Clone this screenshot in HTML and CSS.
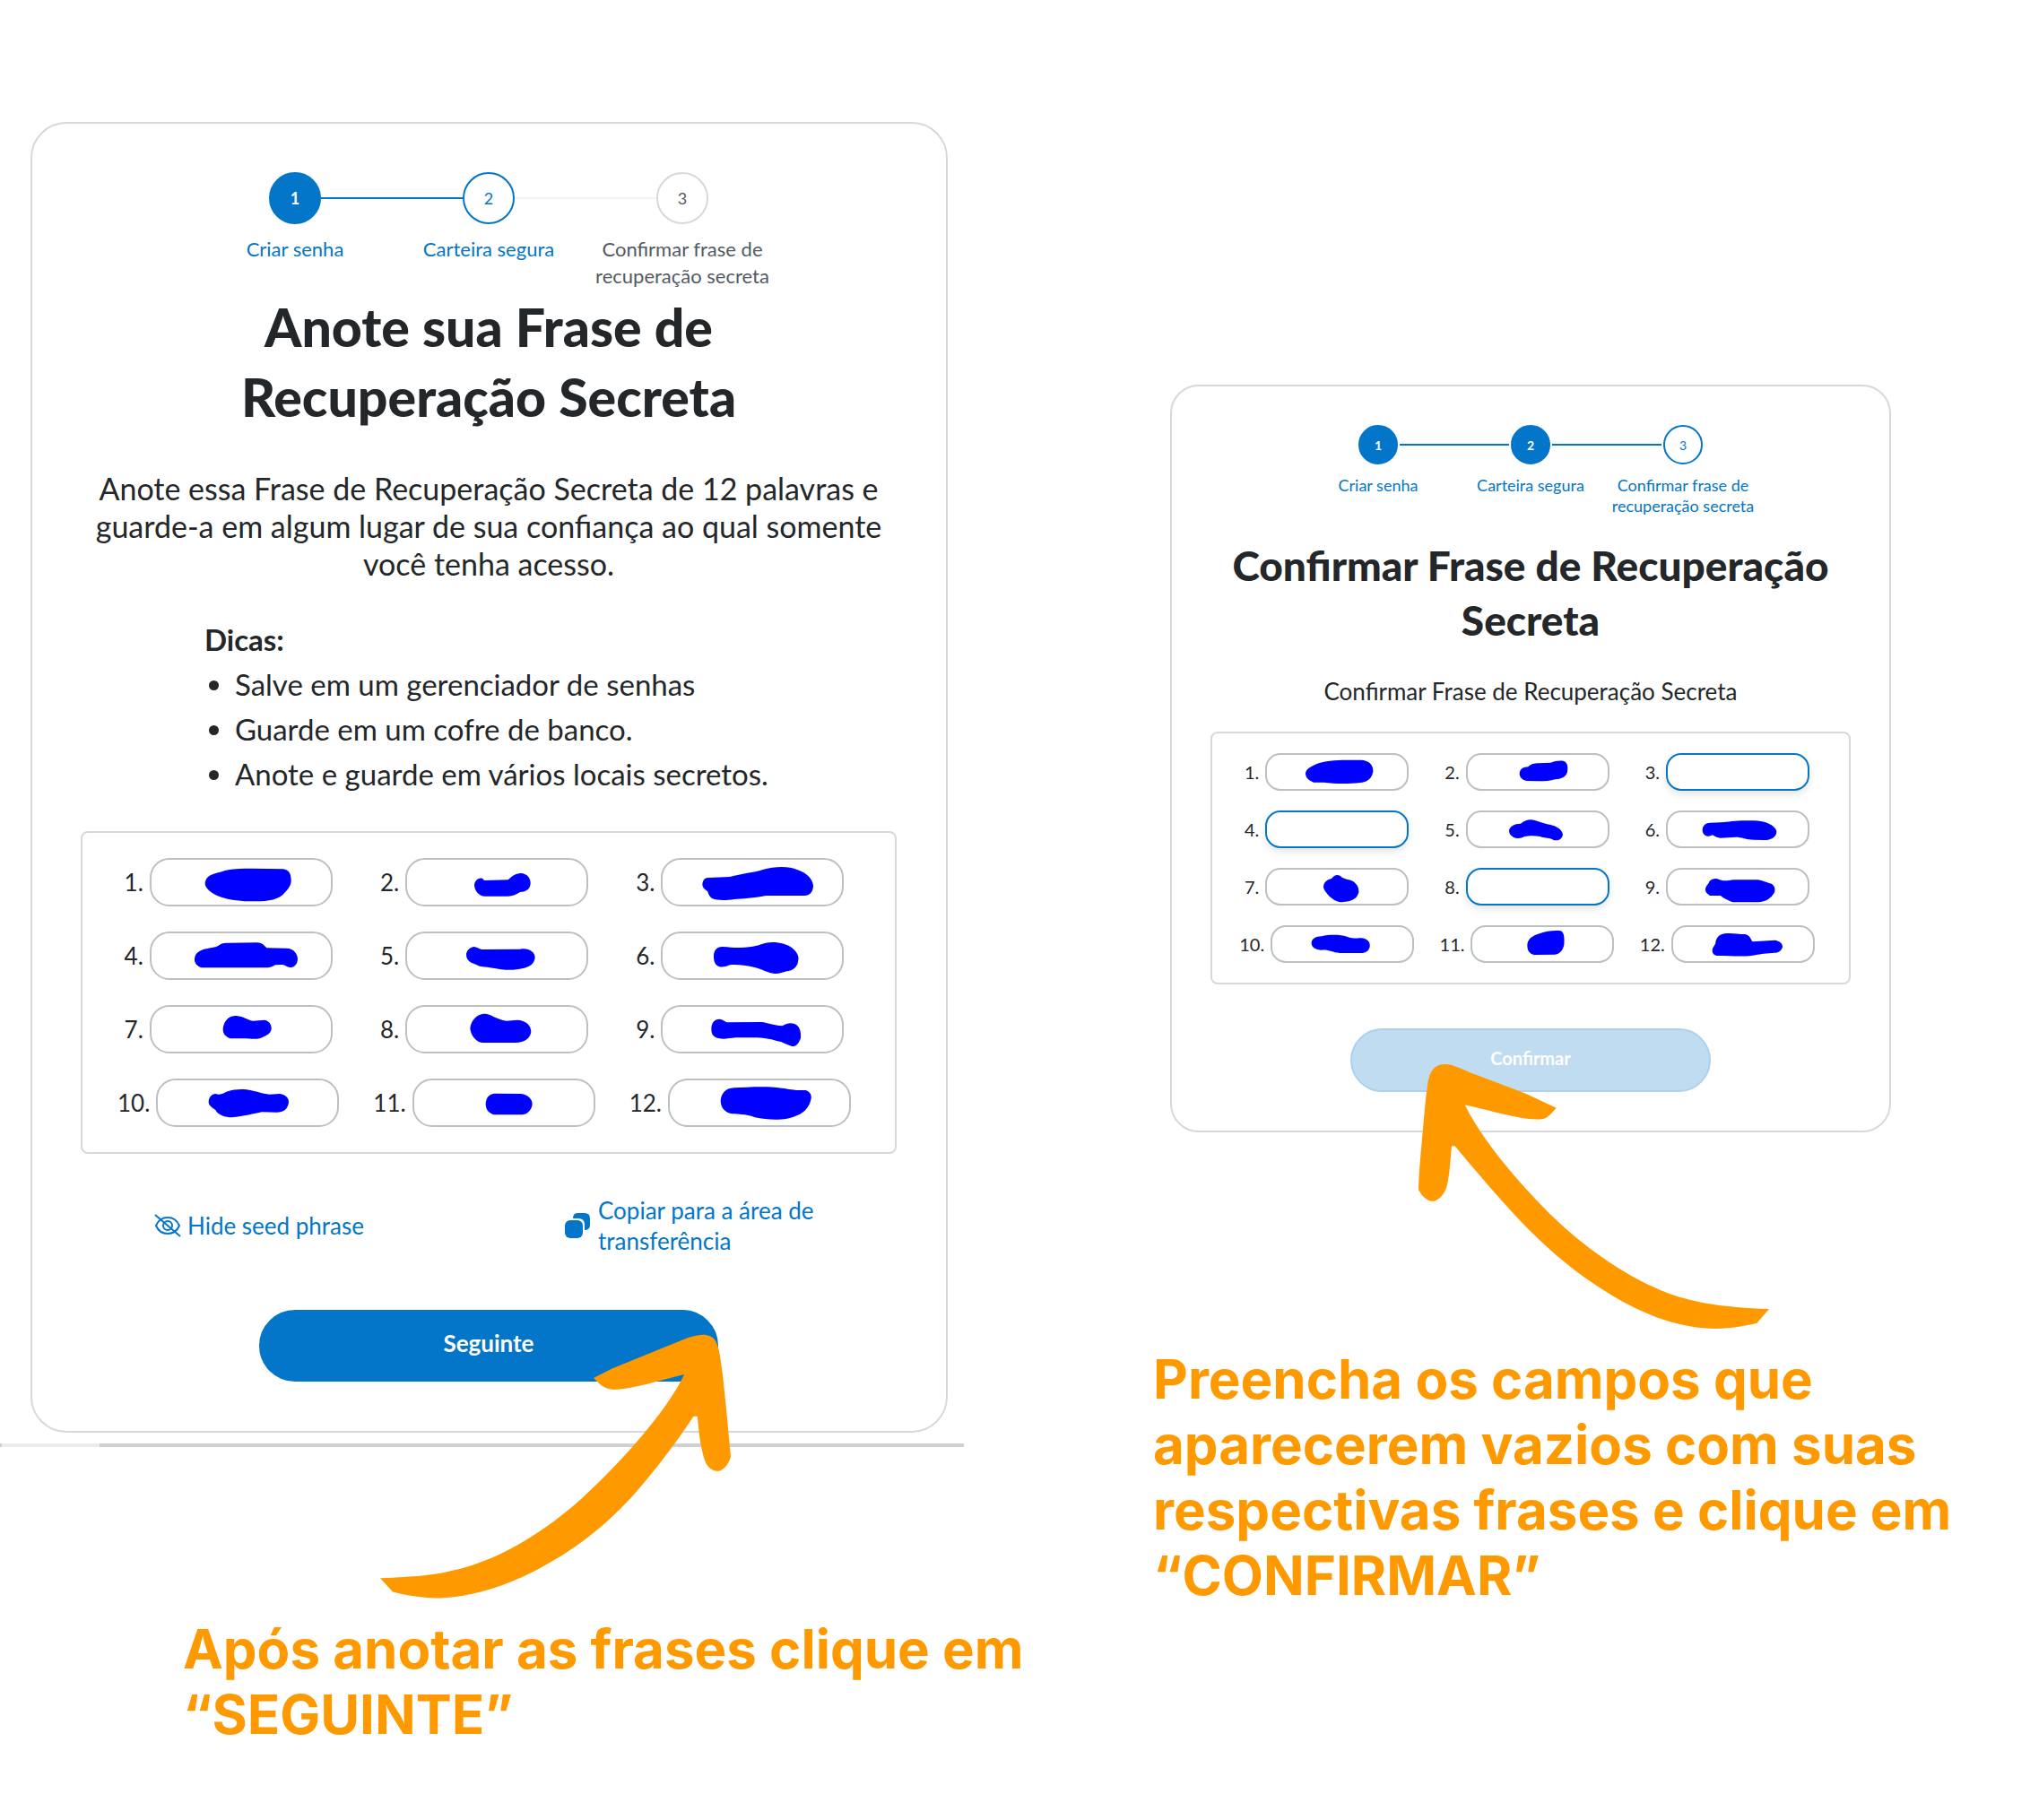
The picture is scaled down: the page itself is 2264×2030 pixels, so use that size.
FILE: index.html
```html
<!DOCTYPE html>
<html lang="pt-BR">
<head>
<meta charset="utf-8">
<meta name="viewport" content="width=device-width, initial-scale=1">
<title>Frase de Recuperação Secreta</title>
<link rel="stylesheet" href="styles.css">
</head>
<body>
<main class="guide">
  <section class="panel panel-write">
    <div class="card">
      <ol class="steps">
        <li class="step done"><span class="marker"><span class="dot">1</span></span><span class="step-label">Criar senha</span></li>
        <li class="step current"><span class="marker"><span class="dot">2</span></span><span class="step-label">Carteira segura</span></li>
        <li class="step"><span class="marker"><span class="dot">3</span></span><span class="step-label">Confirmar frase de recuperação secreta</span></li>
      </ol>
      <h1 class="title">Anote sua Frase de Recuperação Secreta</h1>
      <p class="lead">Anote essa Frase de Recuperação Secreta de 12 palavras e guarde-a em algum lugar de sua confiança ao qual somente você tenha acesso.</p>
      <div class="tips">
        <strong>Dicas:</strong>
        <ul>
          <li>Salve em um gerenciador de senhas</li>
          <li>Guarde em um cofre de banco.</li>
          <li>Anote e guarde em vários locais secretos.</li>
        </ul>
      </div>
      <div class="words">
        <div class="word"><label for="a1">1.</label><span class="field"><input id="a1" type="text" readonly><svg class="ink" viewBox="260 111 610 162" aria-hidden="true"><path d="M445 190C450 170 465 165 495 158C530 145 560 147 600 146L705 148C725 150 733 165 732 190C730 210 715 222 705 233C680 255 640 256 600 256C540 256 500 245 480 235C455 222 440 205 445 190Z"/></svg></span></div>
        <div class="word"><label for="a2">2.</label><span class="field"><input id="a2" type="text" readonly><svg class="ink" viewBox="-263 111 610 162" aria-hidden="true"><path d="M-33 200C-30 185 -18 175 -5 180L0 186L80 184C95 170 105 163 122 162C145 163 156 180 155 198C152 218 138 224 120 225C105 235 95 238 80 239L0 239C-20 236 -33 218 -33 200Z"/></svg></span></div>
        <div class="word"><label for="a3">3.</label><span class="field"><input id="a3" type="text" readonly><svg class="ink" viewBox="590 111 610 162" aria-hidden="true"><path d="M728 198C730 185 735 177 750 177L820 174C860 163 900 160 930 150C970 138 1020 138 1045 150C1075 160 1098 180 1099 205C1098 225 1088 237 1070 237L940 237C900 245 860 248 835 249C800 254 775 252 762 247C750 240 748 228 745 222C735 215 728 210 728 198Z"/></svg></span></div>
        <div class="word"><label for="a4">4.</label><span class="field"><input id="a4" type="text" readonly><svg class="ink" viewBox="272 356 610 162" aria-hidden="true"><path d="M421 447C423 428 438 418 460 414C480 408 495 410 505 400C515 394 525 394 535 394L630 393C650 394 655 404 662 411L730 412C752 413 766 430 766 448C765 465 755 476 740 476C730 476 724 468 715 467L690 468C680 476 670 477 655 477L445 477C428 473 420 460 421 447Z"/></svg></span></div>
        <div class="word"><label for="a5">5.</label><span class="field"><input id="a5" type="text" readonly><svg class="ink" viewBox="-263 356 610 162" aria-hidden="true"><path d="M-60 435C-60 420 -48 408 -33 407C-20 410 -15 417 0 416L120 415C150 410 170 425 170 443C168 465 150 475 130 479C100 487 60 485 30 478C10 475 0 474 -15 472C-30 465 -60 460 -60 435Z"/></svg></span></div>
        <div class="word"><label for="a6">6.</label><span class="field"><input id="a6" type="text" readonly><svg class="ink" viewBox="590 356 610 162" aria-hidden="true"><path d="M766 440C766 420 775 407 795 407C820 408 835 411 855 410C900 408 920 400 940 394C970 388 1010 395 1030 412C1045 425 1052 440 1049 450C1048 475 1030 488 1010 489C995 493 985 498 970 497C945 494 925 480 900 475C870 468 840 466 820 468C805 474 795 476 785 474C770 468 766 455 766 440Z"/></svg></span></div>
        <div class="word"><label for="a7">7.</label><span class="field"><input id="a7" type="text" readonly><svg class="ink" viewBox="266 602 610 162" aria-hidden="true"><path d="M510 683C512 655 530 637 555 638C580 640 590 652 610 655L650 652C665 655 673 668 672 682C670 700 650 706 635 713C615 718 600 714 580 714L535 714C520 708 510 700 510 683Z"/></svg></span></div>
        <div class="word"><label for="a8">8.</label><span class="field"><input id="a8" type="text" readonly><svg class="ink" viewBox="-263 602 610 162" aria-hidden="true"><path d="M-47 680C-45 655 -25 632 0 631C20 630 40 650 75 655L110 652C140 653 157 670 157 691C155 712 135 727 105 728L0 728C-25 730 -45 705 -47 680Z"/></svg></span></div>
        <div class="word"><label for="a9">9.</label><span class="field"><input id="a9" type="text" readonly><svg class="ink" viewBox="590 602 610 162" aria-hidden="true"><path d="M758 682C758 662 768 649 785 649C800 650 803 660 815 660L930 659C955 665 975 670 995 672C1015 660 1030 660 1045 670C1056 680 1058 695 1057 712C1050 732 1040 742 1028 740C1010 736 1000 726 980 723C950 714 930 711 900 711L840 711C820 713 800 717 785 714C765 710 758 700 758 682Z"/></svg></span></div>
        <div class="word"><label for="a10">10.</label><span class="field"><input id="a10" type="text" readonly><svg class="ink" viewBox="287 848 610 162" aria-hidden="true"><path d="M462 925C463 910 473 899 485 899C498 904 505 901 520 893C545 883 580 882 605 888C630 893 645 900 665 901L700 899C722 903 731 915 730 928C727 950 712 961 690 961L640 960C615 965 580 974 540 978C510 978 490 965 485 953C470 942 462 937 462 925Z"/></svg></span></div>
        <div class="word"><label for="a11">11.</label><span class="field"><input id="a11" type="text" readonly><svg class="ink" viewBox="-257 848 610 162" aria-hidden="true"><path d="M-13 933C-12 910 0 900 15 898L105 899C130 902 143 918 143 934C140 955 125 968 108 969L15 969C0 965 -13 955 -13 933Z"/></svg></span></div>
        <div class="word"><label for="a12">12.</label><span class="field"><input id="a12" type="text" readonly><svg class="ink" viewBox="605 848 610 162" aria-hidden="true"><path d="M780 922C782 900 795 880 825 879C870 877 930 872 985 880C1010 883 1025 888 1065 887C1080 892 1085 905 1083 915C1078 940 1065 960 1035 972C1000 990 940 988 895 978C860 965 840 968 820 966C795 962 780 945 780 922Z"/></svg></span></div>
      </div>
      <div class="actions">
        <button type="button" class="link-button">
          <svg class="icon-eye" viewBox="0 0 30 26" aria-hidden="true"><g fill="none" stroke="currentColor" stroke-width="2"><path d="M2 13C5 6 10 4 15 4S25 6 28 13C25 20 20 22 15 22S5 20 2 13Z"/><circle cx="15" cy="13" r="5"/><path d="M1 1L29 25"/></g></svg>
          <span>Hide seed phrase</span>
        </button>
        <button type="button" class="link-button copy">
          <svg class="icon-copy" viewBox="0 0 28 28" aria-hidden="true"><path fill="currentColor" d="M14 0H22Q28 0 28 6V13Q28 19 22 19V13Q22 6 15 6H9Q9 0 14 0Z"/><rect fill="currentColor" y="8" width="20" height="20" rx="6"/></svg>
          <span>Copiar para a área de transferência</span>
        </button>
      </div>
      <button type="button" class="primary">Seguinte</button>
    </div>
    <div class="scrollbar"></div>
    <div class="note">
      <svg class="arrow" viewBox="605 420 557 662" preserveAspectRatio="none" aria-hidden="true"><path d="M944 530L974 506L1088 433C1108 420 1130 414 1138 438C1145 458 1146 490 1149 520C1154 590 1158 660 1162 727C1159 745 1152 758 1144 763H1139C1129 760 1121 748 1117 715C1112 685 1111 655 1109 626L1103 626C1080 680 1050 745 1020 800C975 885 920 955 860 1005C800 1055 745 1080 693 1081C670 1080 645 1074 625 1065L605 1031C665 1028 700 1022 735 1006C800 980 870 910 925 832C985 745 1060 615 1088 521C1050 535 1010 557 977 559C960 559 953 543 944 530Z"/></svg>
      <p>Após anotar as frases clique em “SEGUINTE”</p>
    </div>
  </section>

  <section class="panel panel-confirm">
    <div class="card">
      <ol class="steps">
        <li class="step done"><span class="marker"><span class="dot">1</span></span><span class="step-label">Criar senha</span></li>
        <li class="step done"><span class="marker"><span class="dot">2</span></span><span class="step-label">Carteira segura</span></li>
        <li class="step current"><span class="marker"><span class="dot">3</span></span><span class="step-label">Confirmar frase de recuperação secreta</span></li>
      </ol>
      <h2 class="title">Confirmar Frase de Recuperação Secreta</h2>
      <p class="lead">Confirmar Frase de Recuperação Secreta</p>
      <div class="words">
        <div class="word"><label for="b1">1.</label><span class="field"><input id="b1" type="text" readonly><svg class="ink" viewBox="243 120 480 126" aria-hidden="true"><path d="M378 187C382 170 400 162 425 153C460 142 500 143 565 143C592 146 605 160 604 182C600 205 585 217 560 219C520 224 470 222 440 218L405 218C385 210 378 200 378 187Z"/></svg></span></div>
        <div class="word"><label for="b2">2.</label><span class="field"><input id="b2" type="text" readonly><svg class="ink" viewBox="-283 120 480 126" aria-hidden="true"><path d="M-104 188C-102 172 -92 167 -75 166C-65 156 -55 154 -40 154L0 152C15 147 30 144 45 147C56 152 59 165 56 183C50 202 35 206 15 208C0 213 -20 214 -40 214L-80 213C-95 210 -104 200 -104 188Z"/></svg></span></div>
        <div class="word"><label for="b3">3.</label><span class="field"><input id="b3" class="empty" type="text"></span></div>
        <div class="word"><label for="b4">4.</label><span class="field"><input id="b4" class="empty" type="text"></span></div>
        <div class="word"><label for="b5">5.</label><span class="field"><input id="b5" type="text" readonly><svg class="ink" viewBox="-283 313 480 126" aria-hidden="true"><path d="M-139 380C-137 367 -122 357 -100 357C-85 345 -70 340 -50 347C-35 352 -20 358 0 361C20 365 40 378 41 394C38 410 25 415 10 412C0 404 -20 406 -35 400C-55 397 -75 398 -88 400C-100 408 -115 407 -125 402C-135 396 -139 390 -139 380Z"/></svg></span></div>
        <div class="word"><label for="b6">6.</label><span class="field"><input id="b6" type="text" readonly><svg class="ink" viewBox="387 313 480 126" aria-hidden="true"><path d="M509 378C510 362 520 354 535 354L570 353C600 351 620 346 665 347C700 346 725 352 740 362C755 372 759 382 756 390C752 405 735 412 715 412L680 411C655 410 640 402 620 402L570 405C555 404 550 398 543 395C530 403 510 400 509 378Z"/></svg></span></div>
        <div class="word"><label for="b7">7.</label><span class="field"><input id="b7" type="text" readonly><svg class="ink" viewBox="243 506 480 126" aria-hidden="true"><path d="M438 568C440 552 452 545 465 542C475 528 490 526 500 538C515 545 530 545 540 553C555 565 556 575 556 588C550 610 535 618 500 621C480 620 465 608 455 598C445 585 438 578 438 568Z"/></svg></span></div>
        <div class="word"><label for="b8">8.</label><span class="field"><input id="b8" class="empty" type="text"></span></div>
        <div class="word"><label for="b9">9.</label><span class="field"><input id="b9" type="text" readonly><svg class="ink" viewBox="382 506 480 126" aria-hidden="true"><path d="M514 578C515 565 524 562 527 552C535 542 550 540 560 545C575 552 590 548 610 546L690 546C710 550 720 556 735 559C747 567 748 578 745 588C735 608 715 620 690 621L605 621C590 615 575 608 565 599L530 599C518 592 514 587 514 578Z"/></svg></span></div>
        <div class="word"><label for="b10">10.</label><span class="field"><input id="b10" type="text" readonly><svg class="ink" viewBox="259 699 480 126" aria-hidden="true"><path d="M396 757C398 742 412 737 430 736C455 730 490 730 515 737C530 743 545 743 565 742C585 746 593 755 591 772C585 790 575 793 550 792L490 792C465 790 455 780 430 782C408 782 395 772 396 757Z"/></svg></span></div>
        <div class="word"><label for="b11">11.</label><span class="field"><input id="b11" type="text" readonly><svg class="ink" viewBox="-283 699 480 126" aria-hidden="true"><path d="M-93 765C-92 745 -75 733 -50 726C-30 718 0 715 20 718C30 725 32 740 30 765C25 785 15 795 0 797L-70 798C-85 795 -93 785 -93 765Z"/></svg></span></div>
        <div class="word"><label for="b12">12.</label><span class="field"><input id="b12" type="text" readonly><svg class="ink" viewBox="393 699 480 126" aria-hidden="true"><path d="M530 785C530 770 542 765 541 755C545 735 560 724 585 726C605 727 620 729 640 729C660 735 658 748 665 754L740 749C758 752 766 762 765 772C760 788 750 792 730 792C700 793 690 797 665 800C630 805 600 802 545 801C535 798 530 792 530 785Z"/></svg></span></div>
      </div>
      <button type="button" class="primary" disabled>Confirmar</button>
    </div>
    <div class="note">
      <svg class="arrow" viewBox="532 172 664 660" preserveAspectRatio="none" aria-hidden="true"><path d="M1196 783L1173 818C1150 825 1125 831 1096 832C1030 832 960 800 890 742C770 645 690 515 601 376L595 376C592 410 592 440 586 475C580 500 569 514 557 514C545 511 536 495 532 485C533 440 536 400 540 340C543 300 545 260 549 225C552 200 557 172 582 172C600 172 617 187 640 198L735 245L793 281C785 293 777 307 766 309C730 314 670 287 620 274C650 355 710 450 770 531C840 625 915 690 975 727C1040 768 1110 779 1196 783Z"/></svg>
      <p>Preencha os campos que aparecerem vazios com suas respectivas frases e clique em “CONFIRMAR”</p>
    </div>
  </section>
</main>
</body>
</html>
```
FILE: styles.css
```css
* { box-sizing: border-box; }

body {
  margin: 0;
  background: #fff;
  color: #24272a;
  font-family: Lato, "Open Sans", sans-serif;
}

h1, h2, p, ul, ol { margin: 0; padding: 0; }
button, input { font: inherit; }

.guide {
  display: grid;
  grid-template-columns: 1286fr 978fr;
}

.card {
  display: flex;
  flex-direction: column;
  border: 2px solid #d6d9dc;
  text-align: center;
}

.title { font-weight: 900; }

/* Stepper */
.steps {
  display: grid;
  grid-template-columns: repeat(3, var(--step));
  justify-content: center;
  list-style: none;
}
.step { color: #535a61; }
.marker { display: flex; align-items: center; }
.marker::before, .marker::after {
  content: "";
  flex: 1;
  height: 2px;
  background: #f2f4f6;
}
.dot {
  display: flex;
  align-items: center;
  justify-content: center;
  width: var(--dot);
  height: var(--dot);
  border: 2px solid #d6d9dc;
  border-radius: 50%;
}
.step-label { display: block; }
.done, .current { color: #0376c9; }
.done .dot, .current .dot { border-color: #0376c9; }
.done .dot { background: #0376c9; color: #fff; font-weight: 700; }
.done .marker::before, .done .marker::after, .current .marker::before { background: #0376c9; }
.step:first-child .marker::before, .step:last-child .marker::after { background: transparent; }

/* Word grid */
.words {
  display: grid;
  grid-template-columns: repeat(3, 1fr);
  border: 2px solid #d6d9dc;
  border-radius: 8px;
}
.word { display: flex; align-items: center; justify-content: center; }
.field { position: relative; display: block; }
.field input {
  display: block;
  width: 100%;
  height: 100%;
  padding: 0 16px;
  border: 2px solid #bbc0c5;
  border-radius: inherit;
  background: #fff;
  outline: 0;
}
.field .empty { border-color: #0376c9; box-shadow: 0 4px 8px rgba(0, 0, 0, .1); }
.ink {
  position: absolute;
  inset: 0;
  width: 100%;
  height: 100%;
  fill: #00f;
}

.actions {
  display: grid;
  grid-template-columns: 458px 1fr;
  align-items: center;
  margin-top: 46px;
  padding-left: 82px;
}
.link-button {
  display: flex;
  align-items: center;
  gap: 7px;
  padding: 0;
  border: 0;
  background: none;
  color: #0376c9;
  font-size: 26px;
  line-height: 34px;
  text-align: left;
}
.copy { gap: 9px; max-width: 300px; }
.icon-eye { width: 30px; height: 26px; flex: none; }
.icon-copy { width: 28px; height: 28px; flex: none; }

.primary {
  align-self: center;
  padding: 0 0 6px;
  border: 2px solid #0376c9;
  border-radius: 40px;
  background: #0376c9;
  color: #fff;
  font-weight: 700;
}
.primary:disabled { border-color: #abd1ef; background: #c0dcf0; }

/* Handwritten-style arrow with its caption */
.note {
  position: relative;
  color: #ff9900;
  font: 700 60px/73px Inter, sans-serif;
}
.arrow {
  position: absolute;
  bottom: calc(100% + 20px);
  width: 391px;
  height: 295px;
  fill: #ff9900;
}

.scrollbar {
  height: 4px;
  max-width: 1075px;
  margin-top: 12px;
  background: linear-gradient(to right, #d0d0d0 2px, #ebebeb 2px 111px, #d0d0d0 111px);
}

.panel-write { --step: 216px; --dot: 58px; padding-top: 136px; }
.panel-write .card {
  max-width: 1023px;
  margin-left: 34px;
  padding: 54px 55px 55px 54px;
  border-radius: 40px;
}
.panel-write .steps { font-size: 22px; line-height: 30px; }
.panel-write .dot { font-size: 18px; }
.panel-write .step-label { margin-top: 13px; }
.panel-write .title {
  align-self: center;
  max-width: 640px;
  margin-top: 3px;
  font-size: 59px;
  line-height: 78px;
}
.panel-write .lead { margin-top: 42px; font-size: 34px; line-height: 42px; }
.tips {
  margin: 38px 0 0 138px;
  font-size: 33px;
  line-height: 50px;
  text-align: left;
}
.tips ul { padding-left: 34px; }
.tips strong { display: block; }
.panel-write .words {
  row-gap: 28px;
  margin-top: 39px;
  padding: 28px 30px 28px 20px;
  font-size: 26px;
}
.panel-write .word { gap: 7px; }
.panel-write .field { width: 204px; height: 54px; border-radius: 22px; }
.panel-write .primary { width: 512px; height: 80px; margin-top: 60px; font-size: 26px; }
.panel-write .note { max-width: 1200px; margin-top: 189px; padding-left: 204px; }
.panel-write .arrow { left: 424px; }

.panel-confirm { --step: 170px; --dot: 44px; padding-top: 429px; }
.panel-confirm .card {
  max-width: 804px;
  margin-left: 19px;
  padding: 43px;
  border-radius: 32px;
}
.panel-confirm .steps { font-size: 18px; line-height: 23px; }
.panel-confirm .dot { margin: 0 2px; font-size: 14px; }
.panel-confirm .step-label { margin-top: 12px; }
.panel-confirm .title { margin-top: 24px; font-size: 46px; line-height: 61px; }
.panel-confirm .lead { margin-top: 32px; font-size: 26px; line-height: 34px; }
.panel-confirm .words {
  row-gap: 22px;
  margin-top: 28px;
  padding: 22px 24px 22px 16px;
  font-size: 20px;
}
.panel-confirm .word { gap: 7px; }
.panel-confirm .field { width: 160px; height: 42px; border-radius: 17px; }
.panel-confirm .primary { width: 402px; height: 71px; margin-top: 49px; font-size: 20px; }
.panel-confirm .note { margin-top: 239px; }
.panel-confirm .arrow { left: 296px; }
```
